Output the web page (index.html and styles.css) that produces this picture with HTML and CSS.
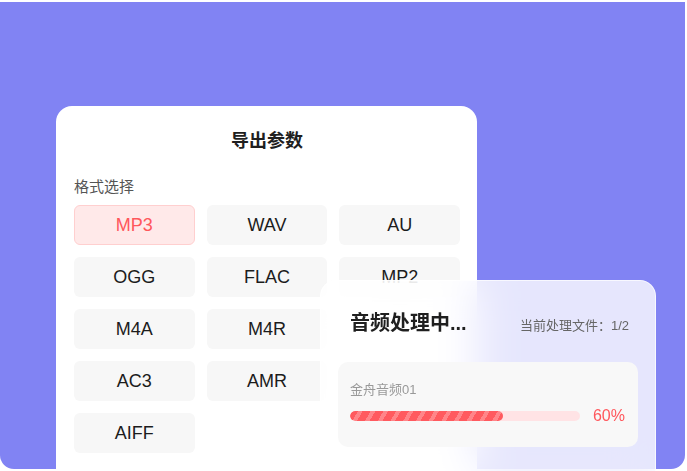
FILE: index.html
```html
<!DOCTYPE html>
<html lang="zh-CN">
<head>
    <meta charset="UTF-8">
    <meta name="viewport" content="width=device-width, initial-scale=1.0">
    <title>导出参数</title>
    <link rel="stylesheet" href="styles.css">
</head>
<body>
    <div id="stage">
        <div class="export-card">
            <h2 class="export-title">导出参数</h2>
            <p class="export-label">格式选择</p>
            <ul class="format-list">
                <li class="format-selected">MP3</li>
                <li>WAV</li>
                <li>AU</li>
                <li>OGG</li>
                <li>FLAC</li>
                <li>MP2</li>
                <li>M4A</li>
                <li>M4R</li>
                <li class="row-start">AC3</li>
                <li>AMR</li>
                <li class="row-start">AIFF</li>
            </ul>
        </div>

        <div class="task-card">
            <div class="task-head">
                <span class="task-title">音频处理中...</span>
                <span class="task-count">当前处理文件：1/2</span>
            </div>
            <div class="task-item">
                <p class="task-name">金舟音频01</p>
                <div class="task-row">
                    <div class="bar"><div class="bar-fill" style="width: 66.5%"></div></div>
                    <span class="task-percent">60%</span>
                </div>
            </div>
        </div>
    </div>
</body>
</html>
```

FILE: styles.css
```css
*{
    margin: 0;
    padding: 0;
    box-sizing: border-box;
}
html, body{
    width: 687px;
    height: 471px;
    overflow: hidden;
    background: #fff;
    font-family: "Liberation Sans", "Noto Sans CJK SC", sans-serif;
}
#stage{
    width: 685px;
    height: 467px;
    margin-top: 2px;
    background: #8183f3;
    border-radius: 0 0 14px 14px;
    position: relative;            /* the progress card floats over the export card */
    padding: 104px 0 0 56px;
}

/* export card */
.export-card{
    width: 421px;
    height: 420px;
    background: #fff;
    border-radius: 16px;
    padding: 22px 17px 0 18px;
}
.export-title{
    font-size: 18px;
    line-height: 26px;
    font-weight: 700;
    text-align: center;
    color: #1f1f1f;
}
.export-label{
    margin-top: 22px;
    font-size: 15px;
    line-height: 21px;
    color: #555;
}
.format-list{
    list-style: none;
    margin-top: 8px;
    display: grid;
    grid-template-columns: repeat(3, 1fr);
    gap: 12px;
}
.format-list li{
    height: 40px;
    line-height: 40px;
    text-align: center;
    font-size: 18px;
    color: #1c1c1c;
    background: #f7f7f7;
    border-radius: 6px;
}
.format-list .row-start{
    grid-column-start: 1;
}
.format-list .format-selected{
    color: #ff575c;
    background: #ffe9e9;
    border: 1px solid #ffcfcf;
    line-height: 38px;
}

/* progress card */
.task-card{
    position: absolute;
    left: 320px;
    top: 278px;
    width: 336px;
    height: 210px;
    border-radius: 16px;
    border: 1px solid rgba(255,255,255,0.7);
    background: rgba(255,255,255,0.8);
    backdrop-filter: blur(22px);
    padding: 28px 17px 0 17px;
}
.task-head{
    display: flex;
    justify-content: space-between;
    align-items: baseline;
    padding: 0 9px 0 12px;
}
.task-title{
    font-size: 20px;
    line-height: 28px;
    font-weight: 700;
    color: #1f1f1f;
}
.task-count{
    font-size: 13px;
    color: #666;
}
.task-item{
    margin-top: 25px;
    height: 85px;
    background: #f8f8f8;
    border-radius: 10px;
    padding: 19px 13px 0 12px;
}
.task-name{
    font-size: 13px;
    line-height: 18px;
    color: #999;
}
.task-row{
    margin-top: 6px;
    display: flex;
    align-items: center;
    gap: 13px;
    height: 22px;
}
.bar{
    flex: 1;
    height: 10px;
    border-radius: 5px;
    background: #ffe3e5;
    overflow: hidden;
}
.bar-fill{
    height: 100%;
    border-radius: 5px;
    background: repeating-linear-gradient(120deg, #ff5a5f 0, #ff5a5f 7px, #ff8589 7px, #ff8589 11px);
}
.task-percent{
    font-size: 16px;
    color: #ff575c;
}
```
